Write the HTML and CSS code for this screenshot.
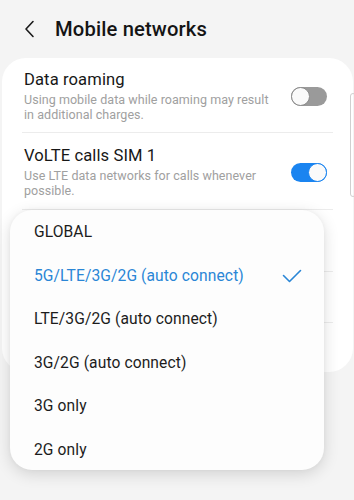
FILE: index.html
```html
<!DOCTYPE html>
<html>
<head>
<meta charset="utf-8">
<link rel="stylesheet" href="styles.css">
</head>
<body>
<div class="screen">
  <header class="header">
    <svg class="back" width="12" height="18" viewBox="0 0 12 18"><path d="M9 1.5 L2 9 L9 16.5" fill="none" stroke="#1a1a1a" stroke-width="1.6" stroke-linecap="round" stroke-linejoin="round"/></svg>
    <h1 class="title">Mobile networks</h1>
  </header>
  <section class="card">
    <div class="row r1">
      <div class="texts">
        <div class="label">Data roaming</div>
        <div class="sub">Using mobile data while roaming may result in additional charges.</div>
      </div>
      <span class="toggle off"><span class="knob"></span></span>
    </div>
    <div class="row r2">
      <div class="texts">
        <div class="label">VoLTE calls SIM 1</div>
        <div class="sub">Use LTE data networks for calls whenever possible.</div>
      </div>
      <span class="toggle on"><span class="knob"></span></span>
    </div>
    <div class="row r3"></div>
    <div class="row r4"></div>
    <div class="row r5"></div>
  </section>
  <div class="scrollbar"></div>
  <ul class="menu">
    <li class="item">GLOBAL</li>
    <li class="item selected">5G/LTE/3G/2G (auto connect)
      <svg class="check" width="20" height="14" viewBox="0 0 20 14"><path d="M1.5 6.5 L7.5 12.5 L18.5 1.5" fill="none" stroke="#2a86d6" stroke-width="1.6" stroke-linecap="round" stroke-linejoin="round"/></svg>
    </li>
    <li class="item">LTE/3G/2G (auto connect)</li>
    <li class="item">3G/2G (auto connect)</li>
    <li class="item">3G only</li>
    <li class="item">2G only</li>
  </ul>
</div>
</body>
</html>
```

FILE: styles.css
```css
* { box-sizing: border-box; }
html, body { margin: 0; padding: 0; }
body {
  background: #f4f4f4;
  font-family: Roboto, "Noto Sans", "Liberation Sans", sans-serif;
  color: #1a1a1a;
  width: 354px;
  height: 500px;
  overflow: hidden;
}
.screen { position: relative; width: 354px; height: 500px; }
.header {
  height: 58px;
  display: flex;
  align-items: center;
  padding: 0 0 0 24px;
  gap: 19px;
}
.back { display: block; }
.title {
  margin: 0;
  font-size: 20.2px;
  font-weight: 500;
  letter-spacing: 0.15px;
  color: #141414;
}
.card {
  margin: 0 1px 0 2px;
  background: #ffffff;
  border-radius: 24px;
  padding: 0 20px;
}
.row {
  display: flex;
  align-items: center;
  border-bottom: 1px solid #ececec;
}
.r1 { height: 75px; padding-top: 2px; }
.r2 { height: 77px; padding-top: 2px; }
.r3 { height: 62px; }
.r4 { height: 51px; }
.r5 { height: 49px; border-bottom: none; }
.texts { flex: 1; padding-left: 2px; }
.label { font-size: 16.6px; color: #171717; line-height: 19px; letter-spacing: 0.1px; }
.sub { font-size: 12.5px; color: #a0a0a0; line-height: 15.5px; margin-top: 3px; padding-right: 16px; letter-spacing: 0.05px; }
.toggle {
  position: relative;
  width: 36px;
  height: 19px;
  border-radius: 10px;
  flex: none;
  margin-right: 6px;
}
.toggle.off { background: #9a9a9a; }
.toggle.on { background: #1a84f0; }
.knob {
  position: absolute;
  top: 0;
  width: 19px;
  height: 19px;
  border-radius: 50%;
  background: #fafafa;
}
.off .knob { left: 0; border: 1.2px solid #8a8a8a; }
.on .knob { right: 0; border: 1.2px solid #1a84f0; }
.scrollbar {
  position: absolute;
  left: 350px;
  top: 93px;
  width: 6px;
  height: 104px;
  border: 1px solid #d0d0d0;
  border-radius: 4px;
}
.menu {
  position: absolute;
  left: 10px;
  top: 210px;
  width: 314px;
  height: 260px;
  margin: 0;
  padding: 0;
  list-style: none;
  background: #fdfdfd;
  border-radius: 22px;
  box-shadow: 0 4px 16px rgba(0,0,0,0.14), 0 0 4px rgba(0,0,0,0.04);
}
.item {
  height: 43.5px;
  display: flex;
  align-items: center;
  padding: 0 22px 0 24px;
  font-size: 15.6px;
  color: #1c1c1c;
  letter-spacing: 0.1px;
}
.item:first-child { height: 44px; }
.item.selected { color: #2a86d6; justify-content: space-between; }
.check { display: block; }
```
